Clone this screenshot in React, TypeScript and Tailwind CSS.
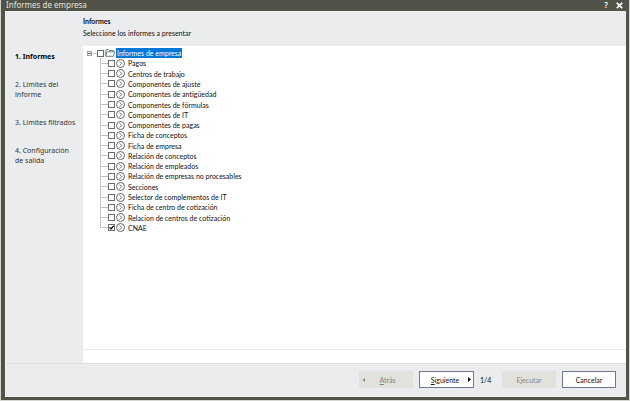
import React, { useState } from 'react';

interface Report {
    id: string;
    label: string;
}

const REPORTS: Report[] = [
    { id: 'pagos', label: 'Pagos' },
    { id: 'centros', label: 'Centros de trabajo' },
    { id: 'ajuste', label: 'Componentes de ajuste' },
    { id: 'antiguedad', label: 'Componentes de antigüedad' },
    { id: 'formulas', label: 'Componentes de fórmulas' },
    { id: 'it', label: 'Componentes de IT' },
    { id: 'pagas', label: 'Componentes de pagas' },
    { id: 'ficha-conceptos', label: 'Ficha de conceptos' },
    { id: 'ficha-empresa', label: 'Ficha de empresa' },
    { id: 'rel-conceptos', label: 'Relación de conceptos' },
    { id: 'rel-empleados', label: 'Relación de empleados' },
    { id: 'rel-empresas', label: 'Relación de empresas no procesables' },
    { id: 'secciones', label: 'Secciones' },
    { id: 'selector-it', label: 'Selector de complementos de IT' },
    { id: 'ficha-cotizacion', label: 'Ficha de centro de cotización' },
    { id: 'rel-cotizacion', label: 'Relacion de centros de cotización' },
    { id: 'cnae', label: 'CNAE' },
];

const STEPS = ['1. Informes', '2. Límites del informe', '3. Límites filtrados', '4. Configuración de salida'];

const FolderIcon = () => (
    <svg viewBox="0 0 10 8" className="w-[10px] h-2 shrink-0" fill="#fff" stroke="#4c5f73" strokeWidth="0.8" strokeLinejoin="round">
        <path d="M0.8 7.2V1.2Q0.8 0.6 1.4 0.6H3.4L4.3 1.5H8.4V2.8" />
        <path d="M0.8 7.3L2 2.8H9.6L8.6 7.3Z" />
    </svg>
);

const ReportIcon = () => (
    <svg viewBox="0 0 9 9" className="w-[9px] h-[9px] shrink-0" fill="none" stroke="#444" strokeWidth="0.8">
        <circle cx="4.5" cy="4.5" r="4" />
        <path d="M3.7 2.4L5.7 4.5L3.7 6.6" />
    </svg>
);

interface TickBoxProps {
    id: string;
    checked: boolean;
    onChange: () => void;
}

const TickBox: React.FC<TickBoxProps> = ({ id, checked, onChange }) => (
    <span className="grid w-[7px] h-[7px] mr-px shrink-0">
        <input
            id={id}
            type="checkbox"
            checked={checked}
            onChange={onChange}
            className="col-start-1 row-start-1 appearance-none w-[7px] h-[7px] m-0 bg-white border border-[#6c6c6c]"
        />
        {checked && (
            <svg viewBox="0 0 7 7" className="col-start-1 row-start-1 w-[7px] h-[7px] pointer-events-none" fill="none" stroke="#000" strokeWidth="1.3">
                <path d="M1.5 3.4L3 4.9L5.6 2" />
            </svg>
        )}
    </span>
);

const App: React.FC = () => {
    const [selected, setSelected] = useState<string[]>(['cnae']);
    const [open, setOpen] = useState(true);

    const toggle = (id: string) =>
        setSelected((prev) => (prev.includes(id) ? prev.filter((item) => item !== id) : [...prev, id]));

    const allChecked = selected.length === REPORTS.length;

    return (
        <div className="h-screen flex flex-col bg-[#d4d6d0] px-px pb-px font-[Lato,sans-serif] text-[7px] leading-[10px] text-[#111]">
            <div className="flex-1 min-h-0 flex flex-col bg-[#515348] pl-1 pr-[3px] pb-[3px]">
                {/* Title bar */}
                <header className="h-[11px] shrink-0 flex items-start justify-between pl-px pr-[3px] text-white">
                    <h1 className="font-['Noto_Sans',sans-serif] text-[8px] leading-[10px] text-[#e4e4de]">Informes de empresa</h1>
                    <div className="flex items-center gap-2">
                        <button type="button" aria-label="Ayuda" className="font-['Noto_Sans',sans-serif] text-[8px] leading-[10px] font-semibold">?</button>
                        <button type="button" aria-label="Cerrar">
                            <svg viewBox="0 0 7 7" className="w-[7px] h-[7px]" stroke="#fff" strokeWidth="1.7">
                                <path d="M0.8 0.8L6.2 6.2M6.2 0.8L0.8 6.2" />
                            </svg>
                        </button>
                    </div>
                </header>

                <div className="flex-1 min-h-0 flex flex-col bg-[#ebecee] border-l border-[#f7f7f7]">
                    <div className="flex-1 min-h-0 flex">
                        <nav className="w-[77px] shrink-0 pl-[9px] pr-[6px] pt-[41px]">
                            <ol className="flex flex-col gap-[18px] font-['Noto_Sans',sans-serif]">
                                {STEPS.map((step, index) => (
                                    <li key={step} className={index === 0 ? 'font-bold text-black' : 'text-[#333]'}>{step}</li>
                                ))}
                            </ol>
                        </nav>

                        <main className="flex-1 min-w-0 flex flex-col">
                            <div className="h-[35px] shrink-0 pt-[5px] flex flex-col gap-[2px]">
                                <h2 className="font-bold">Informes</h2>
                                <p>Seleccione los informes a presentar</p>
                            </div>

                            {/* Report tree */}
                            <div className="flex-1 min-h-0 bg-white pl-1 pt-[2px] overflow-hidden">
                                <ul className="grid auto-rows-fr h-[185px]">
                                    <li className="flex items-center">
                                        <button
                                            type="button"
                                            aria-label="Contraer"
                                            aria-expanded={open}
                                            onClick={() => setOpen(!open)}
                                            className="w-[5px] h-[5px] border border-[#a0a0a0] flex items-center justify-center"
                                        >
                                            <span className="w-[3px] h-px bg-[#606060]"></span>
                                        </button>
                                        <span className="w-[5px] h-px bg-[#c4c4c4]"></span>
                                        <TickBox id="all" checked={allChecked} onChange={() => setSelected(allChecked ? [] : REPORTS.map((r) => r.id))} />
                                        <FolderIcon />
                                        <label htmlFor="all" className="ml-px px-px bg-[#0078d7] text-white">Informes de empresa</label>
                                    </li>
                                    {open && REPORTS.map((report, index) => (
                                        <li key={report.id} className="flex items-center pl-[13px]">
                                            <span className={`w-px bg-[#c4c4c4] self-start ${index === REPORTS.length - 1 ? 'h-1/2' : 'h-full'}`}></span>
                                            <span className="w-[7px] h-px bg-[#c4c4c4]"></span>
                                            <TickBox id={report.id} checked={selected.includes(report.id)} onChange={() => toggle(report.id)} />
                                            <ReportIcon />
                                            <label htmlFor={report.id} className="pl-[3px]">{report.label}</label>
                                        </li>
                                    ))}
                                </ul>
                            </div>
                            <div className="h-[14px] shrink-0 bg-white border-t border-[#ebecee]"></div>
                        </main>
                    </div>

                    {/* Wizard buttons */}
                    <footer className="shrink-0 flex items-center justify-end pt-[7px] pb-[9px] pr-[10px] border-t border-[#dcdcdc]">
                        <button type="button" disabled className="w-[54px] h-[17px] bg-[#e1e1de] text-[#85857f] flex items-center px-[3px]">
                            <svg viewBox="0 0 3 4" className="w-[3px] h-1" fill="#85857f"><path d="M3 0V4L0.5 2Z" /></svg>
                            <span className="flex-1"><u>A</u>trás</span>
                        </button>
                        <button type="button" className="ml-[6px] w-[55px] h-[17px] bg-white border border-[#73778f] flex items-center px-[2px]">
                            <span className="flex-1"><u>S</u>iguiente</span>
                            <svg viewBox="0 0 3 5" className="w-[3px] h-[5px]" fill="#000"><path d="M0 0V5L3 2.5Z" /></svg>
                        </button>
                        <span className="w-7 pl-[6px]">1/4</span>
                        <button type="button" disabled className="w-[54px] h-[17px] bg-[#e1e1de] text-[#85857f]">Ejecutar</button>
                        <button type="button" className="ml-[6px] w-[54px] h-[17px] bg-white border border-[#73778f]">Cancelar</button>
                    </footer>
                </div>
            </div>
        </div>
    );
};

export default App;
